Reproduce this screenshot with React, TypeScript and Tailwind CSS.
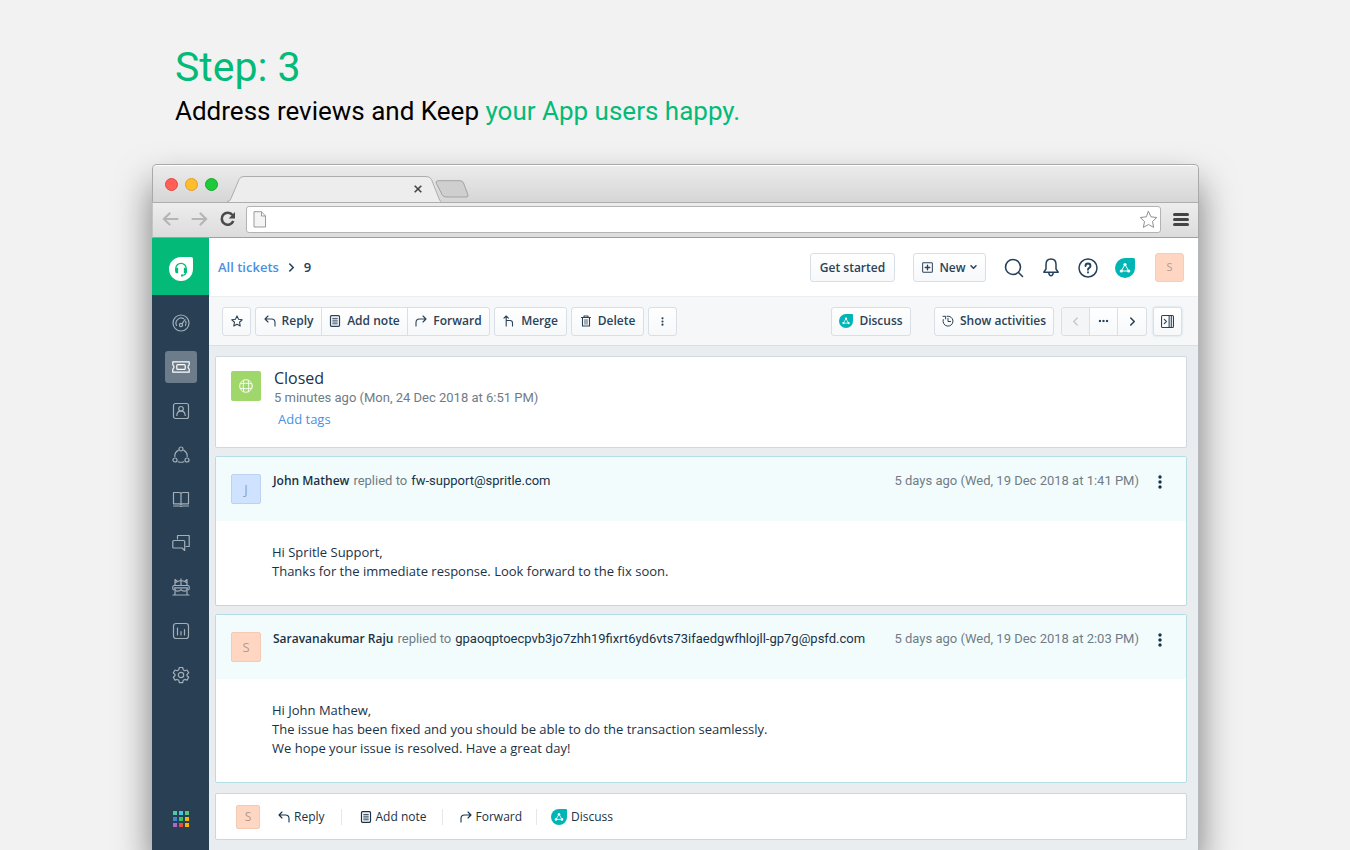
import type { ReactNode } from 'react'

type IconProps = { className?: string }

const stroke = {
  fill: 'none',
  stroke: 'currentColor',
  strokeLinecap: 'round',
  strokeLinejoin: 'round',
} as const

/* Icons */
function ReplyIcon({ className = 'size-3' }: IconProps) {
  return (
    <svg viewBox="0 0 12 12" className={className} {...stroke} strokeWidth="1.1">
      <path d="M4 1 1 4l3 3M1 4h6.5Q11 4 11 7.500V11" />
    </svg>
  )
}

function ForwardIcon({ className = 'size-3' }: IconProps) {
  return (
    <svg viewBox="0 0 12 12" className={className} {...stroke} strokeWidth="1.1">
      <path d="m8 1 3 3-3 3M11 4H4.500Q1 4 1 7.500V11" />
    </svg>
  )
}

function NoteIcon({ className = 'size-3' }: IconProps) {
  return (
    <svg viewBox="0 0 12 12" className={className} {...stroke} strokeWidth="1.2">
      <rect x="1.500" y=".7" width="9" height="10.600" rx="1" />
      <path d="M3.700 3.400h4.600M3.700 5.200h4.600M3.700 7h4.600M3.700 8.800h4.600" strokeWidth=".9" />
    </svg>
  )
}

function MergeIcon() {
  return (
    <svg viewBox="0 0 12 12" className="size-3" {...stroke} strokeWidth="1.1">
      <path d="M1 3.200 3.200 1l2.200 2.200M3.200 1v10M3.200 5.500h4Q9.500 5.500 9.500 8v3" />
    </svg>
  )
}

function TrashIcon() {
  return (
    <svg viewBox="0 0 12 12" className="size-3" {...stroke} strokeWidth="1.1">
      <path d="M1.500 2.500h9M4 2.500V1h4v1.500M2.500 2.500V11h7V2.500" />
      <path d="M4.800 4.500v4.700M6 4.500v4.700M7.200 4.500v4.700" strokeWidth=".6" />
    </svg>
  )
}

function StarIcon({ className = 'size-3' }: IconProps) {
  return (
    <svg viewBox="0 0 20 20" className={className} {...stroke}>
      <path d="m10 1.500 2.600 5.700 6.100.7-4.500 4.200 1.200 6.200-5.400-3-5.400 3 1.200-6.200L1.300 7.900l6.100-.7z" />
    </svg>
  )
}

function Dots({ className }: IconProps) {
  return (
    <svg viewBox="0 0 4 14" className={className} fill="currentColor">
      <circle cx="2" cy="2" r="1.700" />
      <circle cx="2" cy="7" r="1.700" />
      <circle cx="2" cy="12" r="1.700" />
    </svg>
  )
}

function TealDrop({ className = 'size-[14px]' }: IconProps) {
  return (
    <svg viewBox="0 0 20 20" className={className}>
      <path d="M10 0h8.500Q20 0 20 1.500V10A10 10 0 1 1 10 0z" fill="#00b5b5" />
      <path d="M10 6.500 6.300 13h7.400z" fill="none" stroke="#fff" strokeWidth="1" />
      <circle cx="10" cy="6.500" r="1.600" fill="#fff" />
      <circle cx="6.300" cy="13" r="1.600" fill="#fff" />
      <circle cx="13.700" cy="13" r="1.600" fill="#fff" />
    </svg>
  )
}

function Chevron({ className }: IconProps) {
  return (
    <svg viewBox="0 0 8 10" className={className} {...stroke} strokeWidth="1.800">
      <path d="m2 1 4 4-4 4" />
    </svg>
  )
}

/* Sidebar entries, top to bottom */
const navItems: { label: string; active?: boolean; icon: ReactNode }[] = [
  {
    label: 'Dashboard',
    icon: (
      <>
        <circle cx="9" cy="9" r="8" />
        <path d="M4.500 11.500A5.200 5.200 0 0 1 11.500 4.600M13.700 7.200a5.200 5.200 0 0 1-.2 4.300M10 9.800l3-4.300" />
        <circle cx="9" cy="11" r="1.600" />
      </>
    ),
  },
  {
    label: 'Tickets',
    active: true,
    icon: (
      <>
        <path d="M.8 3.800h16.400v3.100q-2.400 2.100 0 4.200v3.100H.8v-3.100q2.400-2.100 0-4.200z" />
        <rect x="4.800" y="6.600" width="8.400" height="4.800" rx="1" />
      </>
    ),
  },
  {
    label: 'Contacts',
    icon: (
      <>
        <rect x="1.500" y="1.500" width="15" height="15" rx="2" />
        <circle cx="9" cy="6.800" r="2.300" />
        <path d="M4.800 13.500q.3-3.700 3-4.300h2.400q2.700.6 3 4.300" />
      </>
    ),
  },
  {
    label: 'Social',
    icon: (
      <>
        <circle cx="9" cy="3" r="2" />
        <circle cx="3" cy="14" r="2" />
        <circle cx="15" cy="14" r="2" />
        <path d="M6.200 4.400A6.500 6.500 0 0 0 2.800 10.500M11.800 4.400a6.500 6.500 0 0 1 3.400 6.100M6.200 15.700q2.800 1.100 5.600 0" />
      </>
    ),
  },
  {
    label: 'Solutions',
    icon: <path d="M9 3.500Q8.500 2.500 7 2.500H1.500v11.300h6L9 14.600l1.500-.8h6V2.500H11Q9.500 2.500 9 3.500zM9 3.500v11M1.500 16h6l1.500.5 1.500-.5h6" />,
  },
  {
    label: 'Forums',
    icon: <path d="M5.500 5V1.500h11.700v11h-3M1.800 6.500h9.900q1 0 1 1v9l-2.700-2.500H1.800q-1 0-1-1V7.500q0-1 1-1z" />,
  },
  {
    label: 'Bots',
    icon: (
      <>
        <path d="M3 7.500V1.500l2 1.800M15 7.500V1.500l-2 1.800M3 4.800Q6 3 9 2.500q3 .5 6 2.300M9 .800v6.700M1 17h16M3 13v4M15 13v4" />
        <path d="M2.200 7.500h13.600q1.400 0 1.400 1.500v1.500q0 1.500-1.400 1.500M2.200 7.500Q.8 7.500.8 9v1.500Q.8 12 2.200 12M2.500 9.800h13M2.800 10q0 3.200 3 3.200Q8 13.200 9 11.500q1 1.700 3.200 1.700 3 0 3-3.200" />
      </>
    ),
  },
  {
    label: 'Analytics',
    icon: (
      <>
        <rect x="1.500" y="1.500" width="15" height="15" rx="2.500" />
        <path d="M5.500 6v7M9 9.500V13M12.500 7.500V13" />
      </>
    ),
  },
  {
    label: 'Admin',
    icon: (
      <>
        <path d="M7.300 1.500h3.400l.5 2.300 1.600.9 2.200-.7 1.700 2.900-1.700 1.600v1.200l1.700 1.500-1.700 2.900-2.200-.7-1.600.9-.5 2.300H7.300l-.5-2.300-1.600-.9-2.200.7-1.700-2.900L3 9.700V8.500L1.300 6.900 3 4l2.200.7 1.600-.9z" />
        <circle cx="9" cy="9" r="2.700" />
      </>
    ),
  },
]

const gridColors = [
  '#4dc9a8', '#43c6e4', '#5ec27a',
  '#3c87d6', '#35c759', '#f7b500',
  '#b565c7', '#ee4b3c', '#f7b500',
]

const messages = [
  {
    initial: 'J',
    avatar: 'bg-[#cfe2ff] border-[#bdd2f3] text-[#8f9fba]',
    name: 'John Mathew',
    email: 'fw-support@spritle.com',
    time: '5 days ago (Wed, 19 Dec 2018 at 1:41 PM)',
    lines: ['Hi Spritle Support,', 'Thanks for the immediate response. Look forward to the fix soon.'],
  },
  {
    initial: 'S',
    avatar: 'bg-[#ffd6c1] border-[#f3cab4] text-[#b79a8c]',
    name: 'Saravanakumar Raju',
    email: 'gpaoqptoecpvb3jo7zhh19fixrt6yd6vts73ifaedgwfhlojll-gp7g@psfd.com',
    time: '5 days ago (Wed, 19 Dec 2018 at 2:03 PM)',
    lines: [
      'Hi John Mathew,',
      'The issue has been fixed and you should be able to do the transaction seamlessly.',
      'We hope your issue is resolved. Have a great day!',
    ],
  },
]

const btn =
  'flex h-[29px] items-center justify-center rounded-[3px] border border-[#d8dfe6] bg-linear-to-b from-white to-[#f6f8fa] text-[12px] font-semibold whitespace-nowrap text-[#2b4257]'
const segment = 'flex h-full items-center justify-center gap-1.5 whitespace-nowrap'
const meta = "font-['Roboto','Open_Sans',sans-serif] text-[13px]"

function BrowserChrome() {
  return (
    <div>
      <div className="flex h-[38px] items-end rounded-t-[5px] border-t border-r border-l border-[#a9a9a9] bg-linear-to-b from-[#ececec] to-[#d6d6d6] shadow-[inset_0_1px_0_#ffffff]">
        <div className="flex items-center gap-[7px] self-center pt-px pl-3">
          <span className="size-[13px] rounded-full border border-[#e0483e] bg-[#ff5f57]" />
          <span className="size-[13px] rounded-full border border-[#dfa023] bg-[#ffbd2e]" />
          <span className="size-[13px] rounded-full border border-[#12ac28] bg-[#1fc93b]" />
        </div>
        <div className="relative ml-[9px] flex h-[26px] w-[214px] items-center justify-end">
          <svg viewBox="0 0 214 26" className="absolute inset-0 size-full">
            <path d="M0 26q3 0 4-3L12 3.500Q13 .5 17 .5h182q4 0 5.500 3L212 23q1 3 2 3z" fill="#ededed" />
            <path d="M0 25.500q3 0 4-3L12 3.500Q13 .5 17 .5h182q4 0 5.500 3L212 22.500q1 3 2 3" fill="none" stroke="#adadad" />
          </svg>
          <button aria-label="Close tab" className="relative mr-[19px]">
            <svg viewBox="0 0 8 8" className="size-2" fill="none" stroke="#444" strokeWidth="1.600">
              <path d="m.7.7 6.600 6.600M7.300.7.7 7.300" />
            </svg>
          </button>
        </div>
        <button aria-label="New tab" className="mb-1 -ml-1.5">
          <svg viewBox="0 0 34 18" className="h-[18px] w-[34px]">
            <path d="M4 .700h21q2.500 0 3.500 2.300l4.300 11.500q1 2.500-1.800 2.500H11q-3 0-4-2.500L1.200 3Q.4.700 4 .700z" fill="#cfcfcf" stroke="#a3a3a3" />
          </svg>
        </button>
      </div>
      <div className="flex h-9 items-center border border-t-[#adadad] border-r-[#a9a9a9] border-b-[#9f9f9f] border-l-[#c4c4c4] bg-linear-to-b from-[#ededed] to-[#dcdcdc] pr-[9px] pb-0.5 pl-[9px]">
        <div className="flex items-center gap-3">
          <svg viewBox="0 0 17 14" className="h-[14px] w-[17px]" {...stroke} stroke="#b5b5b5" strokeWidth="2.200">
            <path d="M7.500 1.500 1.800 7l5.700 5.500M2 7h13.500" />
          </svg>
          <svg viewBox="0 0 17 14" className="h-[14px] w-[17px]" {...stroke} stroke="#b5b5b5" strokeWidth="2.200">
            <path d="M9.500 1.500 15.200 7l-5.700 5.500M15 7H1.500" />
          </svg>
          <svg viewBox="0 0 16 16" className="size-4" fill="none" stroke="#4a4a4a" strokeWidth="2.600">
            <path d="M12.500 4A6 6 0 1 0 13.300 10" />
            <path d="M15 1v6.500H8.700z" fill="#4a4a4a" stroke="none" />
          </svg>
        </div>
        <div className="ml-2.5 flex h-[27px] flex-1 items-center rounded-[3px] border border-[#b3b3b3] bg-white px-1.5">
          <svg viewBox="0 0 14 17" className="h-[17px] w-[14px]" fill="#f4f4f4" stroke="#9b9b9b">
            <path d="M1 .700h7.500L12.500 5v11H1zM8.500.700V5h4" />
          </svg>
          <input aria-label="Address" className="h-full min-w-0 flex-1 px-2 text-[13px] outline-none" />
          <StarIcon className="-mr-1 size-[19px] text-[#8a8a8a]" />
        </div>
        <button aria-label="Menu" className="ml-3 flex w-4 flex-col gap-0.5">
          <span className="h-[3px] rounded-full bg-[#444]" />
          <span className="h-[3px] rounded-full bg-[#444]" />
          <span className="h-[3px] rounded-full bg-[#444]" />
        </button>
      </div>
    </div>
  )
}

function Sidebar() {
  return (
    <nav className="flex w-[57px] shrink-0 flex-col items-center bg-[#283f54]">
      <a href="#" aria-label="Home" className="flex h-[57px] w-full items-center justify-center bg-[#04ba78]">
        <svg viewBox="0 0 24 24" className="mt-1 size-6">
          <path d="M12 0h10q2 0 2 2v10A12 12 0 1 1 12 0z" fill="#fff" />
          <g fill="none" stroke="#04ba78" strokeWidth="1.300">
            <path d="M6.800 14v-2.500a5.200 5.200 0 0 1 10.400 0V14q0 4-3.700 4.400" />
            <path d="M8.500 11.500v4.200H8q-1.300 0-1.300-2.100T8.500 11.500zM15.500 11.500v4.200h.5q1.300 0 1.300-2.100t-1.800-2.100z" fill="#04ba78" />
            <path d="M12 18.400h2" strokeWidth="2" />
          </g>
        </svg>
      </a>
      <div className="flex flex-col gap-3 pt-3">
        {navItems.map((item) => (
          <a
            key={item.label}
            href="#"
            aria-label={item.label}
            className={`flex size-8 items-center justify-center rounded-[3px] ${item.active ? 'bg-[#6c7c8a] text-white' : 'text-[#a3afb9]'}`}
          >
            <svg viewBox="0 0 18 18" className="size-[18px]" {...stroke} strokeWidth="1.200">
              {item.icon}
            </svg>
          </a>
        ))}
      </div>
      <button aria-label="Switch product" className="mt-auto mb-[23px] grid grid-cols-3 gap-0.5">
        {gridColors.map((color, i) => (
          <span key={i} className="size-1" style={{ backgroundColor: color }} />
        ))}
      </button>
    </nav>
  )
}

function TopBar() {
  return (
    <header className="flex h-[58px] items-center bg-white pt-px pr-[14px] pl-[9px] text-[#24405a]">
      <a href="#" className="text-[13px] font-semibold text-[#4a90e2]">All tickets</a>
      <Chevron className="mx-[9px] h-[9px] w-[7px]" />
      <span className="text-[13px] font-semibold">9</span>
      <div className="ml-auto flex items-center">
        <button className={`${btn} w-[85px]`}>Get started</button>
        <button className={`${btn} ml-[18px] w-[73px]`}>
          <svg viewBox="0 0 12 12" className="mr-1.5 size-[11px]" {...stroke} strokeWidth="1.100">
            <rect x=".7" y=".7" width="10.600" height="10.600" rx="1" />
            <path d="M6 3.500v5M3.500 6h5" strokeWidth="1.500" />
          </svg>
          New
          <svg viewBox="0 0 8 6" className="ml-1 h-[5px] w-[7px]" {...stroke} strokeWidth="1.800">
            <path d="m1 1 3 3 3-3" />
          </svg>
        </button>
        <button aria-label="Search" className="ml-[18px]">
          <svg viewBox="0 0 20 20" className="size-5" {...stroke} strokeWidth="1.600">
            <circle cx="9" cy="9" r="7.500" />
            <path d="m14.500 14.500 4 4" />
          </svg>
        </button>
        <button aria-label="Notifications" className="ml-[17px]">
          <svg viewBox="0 0 20 20" className="size-5" {...stroke} strokeWidth="1.500">
            <path d="M10 1C6.600 1 5 3.500 5 6.500V11l-2.200 3.200h14.400L15 11V6.500C15 3.500 13.400 1 10 1zM7.800 15q.4 2.800 2.200 2.800t2.200-2.800" />
          </svg>
        </button>
        <button aria-label="Help" className="ml-[17px]">
          <svg viewBox="0 0 20 20" className="size-5" {...stroke} strokeWidth="1.500">
            <circle cx="10" cy="10" r="9" />
            <path d="M7.500 8q0-2.500 2.500-2.500T12.500 8q0 1.200-1.300 1.900T10 11.700M10 14.300v.2" strokeWidth="1.900" />
          </svg>
        </button>
        <button aria-label="Freshconnect" className="ml-[17px]">
          <TealDrop className="size-5" />
        </button>
        <button className="ml-5 flex size-[29px] items-center justify-center rounded-[3px] border border-[#f5cdb8] bg-[#ffd6c1] text-[11px] text-[#b79a8c]">
          S
        </button>
      </div>
    </header>
  )
}

function Toolbar() {
  return (
    <div className="flex h-[50px] items-center border-t border-b border-t-[#eceff1] border-b-[#d9e0e5] bg-[#f5f7f9] pr-4 pl-[13px]">
      <div className="flex items-center gap-1">
        <button aria-label="Star" className={`${btn} w-[29px]`}>
          <StarIcon className="size-3 stroke-[1.800]" />
        </button>
        <div className={`${btn} overflow-hidden`}>
          <button className={`${segment} w-[66px] border-r border-[#d8dfe6]`}><ReplyIcon />Reply</button>
          <button className={`${segment} w-[86px] border-r border-[#d8dfe6]`}><NoteIcon />Add note</button>
          <button className={`${segment} w-[81px]`}><ForwardIcon />Forward</button>
        </div>
        <button className={`${btn} w-[73px] gap-1.5`}><MergeIcon />Merge</button>
        <button className={`${btn} w-[73px] gap-1.5`}><TrashIcon />Delete</button>
        <button aria-label="More" className={`${btn} w-[29px]`}><Dots className="h-[9px] w-[3px]" /></button>
      </div>
      <div className="ml-auto flex items-center">
        <button className={`${btn} w-[80px] gap-1.5`}><TealDrop />Discuss</button>
        <button className={`${btn} ml-[23px] w-[120px] gap-1.5`}>
          <svg viewBox="0 0 12 12" className="size-3" {...stroke} strokeWidth="1">
            <path d="M5 1.200A5 5 0 1 1 1.200 4.600M1 1.300h2.600v2.600M6 3.300V6.500h2.600" />
          </svg>
          Show activities
        </button>
        <div className={`${btn} ml-[7px] overflow-hidden`}>
          <button aria-label="Previous" className={`${segment} w-7 border-r border-[#d8dfe6] bg-[#f3f5f7] text-[#c5ccd3]`}>
            <Chevron className="h-[9px] w-[7px] rotate-180" />
          </button>
          <button aria-label="Ticket list" className={`${segment} w-7 border-r border-[#d8dfe6]`}>
            <Dots className="h-[10px] w-[3px] rotate-90" />
          </button>
          <button aria-label="Next" className={`${segment} w-7`}>
            <Chevron className="h-[9px] w-[7px]" />
          </button>
        </div>
        <button aria-label="Toggle details" className={`${btn} ml-[6px] w-[29px] border-[#bcc8d2] shadow-[0_0_2px_#c7d0d8]`}>
          <svg viewBox="0 0 12 12" className="size-[13px]" {...stroke} strokeWidth="1">
            <rect x=".5" y=".5" width="11" height="11" rx="1" />
            <path d="M7.500.500v11M9.500.500v11M3 4l2 2-2 2" />
          </svg>
        </button>
      </div>
    </div>
  )
}

function StatusCard() {
  return (
    <section className="flex gap-[13px] rounded-[2px] border border-[#cfd9e1] bg-white px-[15px] pt-[14px] pb-4">
      <span className="flex size-[30px] items-center justify-center rounded-[2px] bg-[#a0d76a] text-white">
        <svg viewBox="0 0 14 14" className="size-[14px]" {...stroke} strokeWidth=".9">
          <circle cx="7" cy="7" r="6.300" />
          <path d="M4.700 1.200q-1 5.800 0 11.600M9.300 1.200q1 5.800 0 11.600M1.200 4.700q5.800-1 11.600 0M1.200 9.300q5.800 1 11.600 0" />
        </svg>
      </span>
      <div>
        <h2 className="text-[16px] leading-[14px] font-medium text-[#183247]">Closed</h2>
        <p className={`mt-[3px] leading-5 text-[#6f7c87] ${meta}`}>5 minutes ago (Mon, 24 Dec 2018 at 6:51 PM)</p>
        <a href="#" className="ml-1 block text-[13px] leading-[23px] text-[#4a90e2]">Add tags</a>
      </div>
    </section>
  )
}

function MessageCard({ message }: { message: (typeof messages)[number] }) {
  return (
    <article className="rounded-[2px] border border-[#b5dde6] bg-white text-[13px] leading-[19px] text-[#183247]">
      <div className="flex h-16 items-start bg-[#f3fcfc] px-[15px]">
        <span className={`mt-[17px] flex size-[30px] shrink-0 items-center justify-center rounded-[2px] border ${message.avatar}`}>
          {message.initial}
        </span>
        <p className="mt-[14px] ml-3 flex gap-1 whitespace-nowrap">
          <strong className="text-[12px] font-semibold">{message.name}</strong>
          <span className={`text-[#6f7c87] ${meta}`}>replied to</span>
          <span className={meta}>{message.email}</span>
        </p>
        <time className={`mt-[14px] ml-auto whitespace-nowrap text-[#6f7c87] ${meta}`}>{message.time}</time>
        <button aria-label="Message actions" className="mt-[18px] mr-[9px] ml-[19px]">
          <Dots className="h-[14px] w-1" />
        </button>
      </div>
      <div className="pt-[22px] pb-6 pl-14">
        {message.lines.map((line) => (
          <p key={line}>{line}</p>
        ))}
      </div>
    </article>
  )
}

function ReplyBar() {
  const action = 'flex items-center gap-1 text-[12px] font-medium whitespace-nowrap text-[#183247]'
  return (
    <section className="mt-0.5 flex h-[47px] items-center rounded-[2px] border border-[#cfd5dd] bg-white px-5">
      <span className="flex size-6 items-center justify-center rounded-[2px] border border-[#f3cab4] bg-[#ffd6c1] text-[12px] text-[#b79a8c]">S</span>
      <button className={`${action} ml-[18px]`}><ReplyIcon />Reply</button>
      <span className="mx-4 h-4 w-px bg-[#e4e8ec]" />
      <button className={`${action} ml-0.5`}><NoteIcon />Add note</button>
      <span className="mx-[15px] h-4 w-px bg-[#e4e8ec]" />
      <button className={`${action} ml-0.5`}><ForwardIcon />Forward</button>
      <span className="mx-[14px] h-4 w-px bg-[#e4e8ec]" />
      <button className={action}><TealDrop className="size-4" />Discuss</button>
    </section>
  )
}

export default function App() {
  return (
    <div className="flex min-h-screen flex-col overflow-hidden bg-[#f2f2f2] pr-[151px] pl-[152px] font-['Open_Sans','Noto_Sans',sans-serif]">
      <div className="h-[164px] pt-[43px] pl-[23px] font-['Roboto',sans-serif]">
        <h1 className="text-[41px] leading-[48px] text-[#04ba78]">Step: 3</h1>
        <p className="mt-1 text-[26px] leading-8 text-black">
          Address reviews and Keep <span className="text-[#04ba78]">your App users happy.</span>
        </p>
      </div>

      {/* Browser window */}
      <div className="flex flex-1 flex-col rounded-t-[5px] shadow-[0_20px_36px_rgba(0,0,0,0.5)]">
        <BrowserChrome />
        <div className="flex flex-1">
          <Sidebar />
          <div className="flex min-w-0 flex-1 flex-col border-r border-[#b5b9bc] bg-[#e9edf0]">
            <TopBar />
            <Toolbar />
            <main className="flex flex-col gap-2 pt-[10px] pr-[11px] pb-[10px] pl-1.5">
              <StatusCard />
              {messages.map((message) => (
                <MessageCard key={message.name} message={message} />
              ))}
              <ReplyBar />
            </main>
          </div>
        </div>
      </div>
    </div>
  )
}
